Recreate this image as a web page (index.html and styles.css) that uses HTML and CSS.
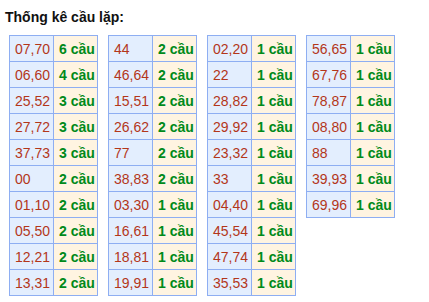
FILE: index.html
```html
<!DOCTYPE html>
<html>
<head>
<meta charset="utf-8">
<link rel="stylesheet" href="styles.css">
</head>
<body>
<div class="page">
  <div class="title">Thống kê cầu lặp:</div>
  <div class="tables">
    <table class="t">
      <tr><td class="n">07,70</td><td class="c">6 cầu</td></tr>
      <tr><td class="n">06,60</td><td class="c">4 cầu</td></tr>
      <tr><td class="n">25,52</td><td class="c">3 cầu</td></tr>
      <tr><td class="n">27,72</td><td class="c">3 cầu</td></tr>
      <tr><td class="n">37,73</td><td class="c">3 cầu</td></tr>
      <tr><td class="n">00</td><td class="c">2 cầu</td></tr>
      <tr><td class="n">01,10</td><td class="c">2 cầu</td></tr>
      <tr><td class="n">05,50</td><td class="c">2 cầu</td></tr>
      <tr><td class="n">12,21</td><td class="c">2 cầu</td></tr>
      <tr><td class="n">13,31</td><td class="c">2 cầu</td></tr>
    </table>
    <table class="t">
      <tr><td class="n">44</td><td class="c">2 cầu</td></tr>
      <tr><td class="n">46,64</td><td class="c">2 cầu</td></tr>
      <tr><td class="n">15,51</td><td class="c">2 cầu</td></tr>
      <tr><td class="n">26,62</td><td class="c">2 cầu</td></tr>
      <tr><td class="n">77</td><td class="c">2 cầu</td></tr>
      <tr><td class="n">38,83</td><td class="c">2 cầu</td></tr>
      <tr><td class="n">03,30</td><td class="c">1 cầu</td></tr>
      <tr><td class="n">16,61</td><td class="c">1 cầu</td></tr>
      <tr><td class="n">18,81</td><td class="c">1 cầu</td></tr>
      <tr><td class="n">19,91</td><td class="c">1 cầu</td></tr>
    </table>
    <table class="t">
      <tr><td class="n">02,20</td><td class="c">1 cầu</td></tr>
      <tr><td class="n">22</td><td class="c">1 cầu</td></tr>
      <tr><td class="n">28,82</td><td class="c">1 cầu</td></tr>
      <tr><td class="n">29,92</td><td class="c">1 cầu</td></tr>
      <tr><td class="n">23,32</td><td class="c">1 cầu</td></tr>
      <tr><td class="n">33</td><td class="c">1 cầu</td></tr>
      <tr><td class="n">04,40</td><td class="c">1 cầu</td></tr>
      <tr><td class="n">45,54</td><td class="c">1 cầu</td></tr>
      <tr><td class="n">47,74</td><td class="c">1 cầu</td></tr>
      <tr><td class="n">35,53</td><td class="c">1 cầu</td></tr>
    </table>
    <table class="t">
      <tr><td class="n">56,65</td><td class="c">1 cầu</td></tr>
      <tr><td class="n">67,76</td><td class="c">1 cầu</td></tr>
      <tr><td class="n">78,87</td><td class="c">1 cầu</td></tr>
      <tr><td class="n">08,80</td><td class="c">1 cầu</td></tr>
      <tr><td class="n">88</td><td class="c">1 cầu</td></tr>
      <tr><td class="n">39,93</td><td class="c">1 cầu</td></tr>
      <tr><td class="n">69,96</td><td class="c">1 cầu</td></tr>
    </table>
  </div>
</div>
</body>
</html>
```

FILE: styles.css
```css
html, body {
  margin: 0;
  padding: 0;
  background: #ffffff;
}
.page {
  padding: 9px 0 0 5px;
  font-family: "Liberation Sans", Arial, sans-serif;
  font-size: 14px;
}
.title {
  font-weight: bold;
  color: #111111;
  line-height: 16px;
  height: 16px;
}
.tables {
  margin-top: 10px;
  padding-left: 4px;
  display: flex;
  align-items: flex-start;
  gap: 10px;
}
.t {
  border-collapse: collapse;
  border: 1px solid #8eaef2;
}
.t td {
  border: 1px solid #8eaef2;
  height: 26px;
  padding: 0 0 0 5px;
  line-height: 16px;
  box-sizing: border-box;
  white-space: nowrap;
  vertical-align: middle;
}
.n {
  width: 44px;
  background: #e3eefe;
  color: #b3361a;
}
.c {
  width: 44px;
  background: #fff4e1;
  color: #008a1a;
  font-weight: bold;
}
```
